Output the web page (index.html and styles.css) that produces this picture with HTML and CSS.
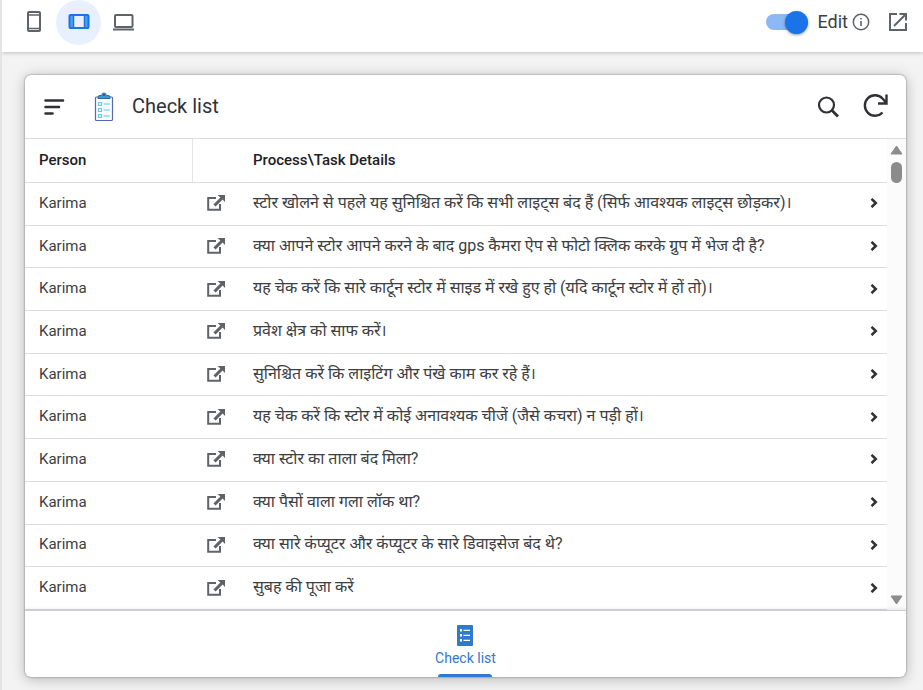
FILE: index.html
```html
<!DOCTYPE html>
<html lang="en">
<head>
<meta charset="utf-8">
<title>Check list</title>
<link rel="stylesheet" href="styles.css">
</head>
<body>
<svg class="sprite" aria-hidden="true">
  <symbol id="open" viewBox="0 0 18 16"><path d="M9 3H1.200v11.800H13V9" fill="none" stroke="currentColor" stroke-width="2"/><path d="M10.500 0H18v7l-2.400-2.400-7 7-2.200-2.200 7-7z" fill="currentColor"/></symbol>
  <symbol id="chevron" viewBox="0 0 8 10"><path d="M1.500 .8 5.800 5 1.500 9.200" fill="none" stroke="currentColor" stroke-width="2.500"/></symbol>
</svg>
<header class="preview-bar">
  <nav class="devices" aria-label="Device preview">
    <button class="device" aria-label="Phone"><svg width="24" height="24" viewBox="0 0 24 24" fill="none" stroke="currentColor"><rect x="6" y="2" width="12" height="19" rx="1" stroke-width="2"/><path d="M5 5h14M5 18.500h14" stroke-width="1.500"/></svg></button>
    <button class="device active" aria-label="Tablet" aria-pressed="true"><svg width="24" height="24" viewBox="0 0 24 24" fill="none" stroke="currentColor"><path d="M2.500 5h4v14h-4zM17.500 5h4v14h-4z" fill="#4aa3f0" stroke="none"/><rect x="2.500" y="5" width="19" height="13" rx="1" stroke-width="2"/><path d="M6.500 5v13M17.500 5v13" stroke-width="1.500"/></svg></button>
    <button class="device" aria-label="Laptop"><svg width="24" height="24" viewBox="0 0 24 24" fill="none" stroke="currentColor"><rect x="3" y="5" width="17.500" height="12" rx="1" stroke-width="2"/><path d="M1 19.500h21" stroke-width="2"/></svg></button>
  </nav>
  <div class="edit">
    <input class="switch" type="checkbox" role="switch" id="edit" checked>
    <label for="edit">Edit</label>
    <button class="info" aria-label="About editing"><svg width="18" height="18" viewBox="0 0 18 18"><circle cx="9" cy="9" r="7.700" fill="none" stroke="currentColor" stroke-width="1.500"/><path d="M8.200 8h1.600v5H8.200zM8.200 5h1.600v1.600H8.200z" fill="currentColor"/></svg></button>
    <button class="popout" aria-label="Open in new tab"><svg width="20" height="20" viewBox="0 0 20 20" fill="none" stroke="currentColor" stroke-width="2"><path d="M9 2H2v16h16v-7M11.500 2H18v6.500M18 2 6 14"/></svg></button>
  </div>
</header>
<main class="stage">
  <section class="app">
    <header class="app-bar">
      <button class="menu" aria-label="Menu"><svg width="22" height="18" viewBox="0 0 22 18" stroke="currentColor" stroke-width="2.600" stroke-linecap="round"><path d="M2.500 2.500H20M2.500 9H16M2.500 15.500h7"/></svg></button>
      <svg class="logo" width="20" height="30" viewBox="0 0 20 30" fill="none"><rect x="1.500" y="5" width="17" height="23.500" rx="1" fill="#f8fcff" stroke="#5967ad" stroke-width="1.200"/><path d="M4 6.500V5q0-1.500 2-1.500h1.500Q8 1 10 1t2.500 2.500H14q2 0 2 1.500v1.500z" fill="#3b9ad4" stroke="#3166a0"/><circle cx="10" cy="3" r="1" fill="#23517f"/><g stroke="#63c8ee" stroke-width="1.200"><path d="M4.500 10.500h3v3h-3zM4.500 16.500h3v3h-3zM4.500 22.500h3v3h-3zM9.500 12h6.500M9.500 18h6.500M9.500 24h6.500"/></g></svg>
      <h1>Check list</h1>
      <button aria-label="Search"><svg width="24" height="24" viewBox="0 0 24 24" fill="none" stroke="currentColor"><circle cx="10.500" cy="10" r="7.500" stroke-width="2.200"/><path d="m15.800 15.300 6.200 6.200" stroke-width="2.800"/></svg></button>
      <button aria-label="Refresh"><svg width="26" height="26" viewBox="0 0 26 26" fill="none" stroke="currentColor" stroke-width="2.400"><path d="M20.500 18.500A10.200 10.200 0 1 1 20.500 4.500L24 8.500M16 9.500H24.500V.5"/></svg></button>
    </header>
    <div class="viewport">
      <table>
        <colgroup><col class="c-person"><col class="c-open"><col><col class="c-go"></colgroup>
        <thead><tr><th class="divided">Person</th><th></th><th>Process\Task Details</th><th></th></tr></thead>
        <tbody>
          <tr><td>Karima</td><td class="open"><svg><use href="#open"/></svg></td><td class="task" lang="hi">स्टोर खोलने से पहले यह सुनिश्चित करें कि सभी लाइट्स बंद हैं (सिर्फ आवश्यक लाइट्स छोड़कर)।</td><td class="go"><svg><use href="#chevron"/></svg></td></tr>
          <tr><td>Karima</td><td class="open"><svg><use href="#open"/></svg></td><td class="task" lang="hi">क्या आपने स्टोर आपने करने के बाद gps कैमरा ऐप से फोटो क्लिक करके ग्रुप में भेज दी है?</td><td class="go"><svg><use href="#chevron"/></svg></td></tr>
          <tr><td>Karima</td><td class="open"><svg><use href="#open"/></svg></td><td class="task" lang="hi">यह चेक करें कि सारे कार्टून स्टोर में साइड में रखे हुए हो (यदि कार्टून स्टोर में हों तो)।</td><td class="go"><svg><use href="#chevron"/></svg></td></tr>
          <tr><td>Karima</td><td class="open"><svg><use href="#open"/></svg></td><td class="task" lang="hi">प्रवेश क्षेत्र को साफ करें।</td><td class="go"><svg><use href="#chevron"/></svg></td></tr>
          <tr><td>Karima</td><td class="open"><svg><use href="#open"/></svg></td><td class="task" lang="hi">सुनिश्चित करें कि लाइटिंग और पंखे काम कर रहे हैं।</td><td class="go"><svg><use href="#chevron"/></svg></td></tr>
          <tr><td>Karima</td><td class="open"><svg><use href="#open"/></svg></td><td class="task" lang="hi">यह चेक करें कि स्टोर में कोई अनावश्यक चीजें (जैसे कचरा) न पड़ी हों।</td><td class="go"><svg><use href="#chevron"/></svg></td></tr>
          <tr><td>Karima</td><td class="open"><svg><use href="#open"/></svg></td><td class="task" lang="hi">क्या स्टोर का ताला बंद मिला?</td><td class="go"><svg><use href="#chevron"/></svg></td></tr>
          <tr><td>Karima</td><td class="open"><svg><use href="#open"/></svg></td><td class="task" lang="hi">क्या पैसों वाला गला लॉक था?</td><td class="go"><svg><use href="#chevron"/></svg></td></tr>
          <tr><td>Karima</td><td class="open"><svg><use href="#open"/></svg></td><td class="task" lang="hi">क्या सारे कंप्यूटर और कंप्यूटर के सारे डिवाइसेज बंद थे?</td><td class="go"><svg><use href="#chevron"/></svg></td></tr>
          <tr><td>Karima</td><td class="open"><svg><use href="#open"/></svg></td><td class="task" lang="hi">सुबह की पूजा करें</td><td class="go"><svg><use href="#chevron"/></svg></td></tr>
        </tbody>
      </table>
      <div class="scrollbar" aria-hidden="true">
        <svg width="13" height="10" viewBox="0 0 13 10"><path d="M6.500 1 12 9H1z" fill="currentColor" stroke="currentColor" stroke-linejoin="round"/></svg>
        <span class="thumb"></span>
        <svg width="13" height="10" viewBox="0 0 13 10"><path d="M6.500 9 12 1H1z" fill="currentColor" stroke="currentColor" stroke-linejoin="round"/></svg>
      </div>
    </div>
    <nav class="tabs">
      <a class="tab" href="#" aria-current="page">
        <svg width="16" height="21" viewBox="0 0 16 21"><rect width="16" height="21" rx="1" fill="currentColor"/><path d="M3 4h2v2.500H3zM3 9h2v2.500H3zM3 14h2v2.500H3zM6.500 4.700H13V6H6.500zM6.500 9.700H13V11H6.500zM6.500 14.700H13V16H6.500z" fill="#fff"/></svg>
        <span>Check list</span>
      </a>
    </nav>
  </section>
</main>
</body>
</html>
```
FILE: styles.css
```css
* { box-sizing: border-box; }

body {
  display: flex;
  flex-direction: column;
  height: 100vh;
  margin: 0;
  border-left: 2px solid #e4e4e4;
  background: #f3f3f3;
  color: #3c4043;
  font-family: Roboto, "Noto Sans Devanagari", "Noto Sans", sans-serif;
  font-size: 15px;
}

.sprite { position: absolute; width: 0; height: 0; }
svg { display: block; }

button {
  display: grid;
  place-items: center;
  padding: 0;
  border: 0;
  background: none;
  color: inherit;
}

.preview-bar {
  position: relative;
  display: flex;
  justify-content: space-between;
  align-items: center;
  height: 52px;
  padding: 0 15px 8px 9px;
  background: #fff;
  box-shadow: 0 1px 4px rgba(0, 0, 0, .22);
  color: #5f6368;
}

.devices { display: flex; }
.device { width: 45px; height: 45px; border-radius: 50%; }
.device.active { background: #e8f0fe; color: #1a73e8; }

.edit { display: flex; align-items: center; }
.edit label { margin: 0 4px 0 10px; color: #3c4043; font-size: 18px; line-height: 22px; }
.popout { margin-left: 18px; }

.switch {
  appearance: none;
  display: flex;
  align-items: center;
  justify-content: flex-end;
  width: 42px;
  height: 16px;
  margin: 0;
  border-radius: 8px;
  background: #8cb8f4;
}
.switch::before {
  content: "";
  width: 23px;
  height: 23px;
  border-radius: 50%;
  background: #1a73e8;
  box-shadow: 0 1px 3px rgba(0, 0, 0, .4);
}
.switch:not(:checked) { justify-content: flex-start; }

.stage {
  display: flex;
  flex: 1;
  min-height: 0;
  padding: 23px 17px 13px 23px;
}

.app {
  display: flex;
  flex: 1;
  flex-direction: column;
  overflow: hidden;
  border-radius: 6px;
  background: #fff;
  box-shadow: 0 0 2px rgba(0, 0, 0, .5), 0 2px 14px rgba(0, 0, 0, .26);
}

.app-bar {
  display: flex;
  align-items: center;
  height: 64px;
  padding: 0 18px;
  border-bottom: 1px solid #dadce0;
  color: #303134;
}
.logo { margin: 0 18px 0 29px; }
h1 { flex: 1; margin: 0; padding-bottom: 2px; font-size: 20px; font-weight: 400; line-height: 26px; }
.app-bar h1 ~ button { margin-left: 22px; }

.viewport { display: flex; flex: 1; min-height: 0; }

table {
  flex: 1;
  height: 100%;
  border-collapse: separate;
  border-spacing: 0;
  table-layout: fixed;
}
.c-person { width: 168px; }
.c-open { width: 46px; }
.c-go { width: 32px; }

th, td {
  padding: 0 14px 2px;
  border-bottom: 1px solid #dadce0;
  text-align: left;
  line-height: 20px;
  white-space: nowrap;
}
th { height: 44px; color: #202124; font-weight: 500; }
.divided { border-right: 1px solid #e4e5e8; }
.task { font-size: 16px; }

.open, .go { padding: 0 0 1px; color: #5f6368; }
.open svg { width: 18px; height: 16px; margin: 0 auto; }
.go { color: #303134; }
.go svg { width: 8px; height: 10px; margin-left: 15px; }

.scrollbar {
  display: flex;
  flex-direction: column;
  align-items: center;
  width: 19px;
  padding: 6px 0 5px;
  background: #fbfbfb;
  color: #8b8b8b;
}
.thumb { width: 11px; height: 21px; margin: 7px 0 auto; border-radius: 6px; background: currentColor; }

.tabs {
  display: flex;
  justify-content: center;
  height: 67px;
  border-top: 1px solid #ccced4;
  box-shadow: 0 0 4px rgba(0, 0, 0, .16);
}
.tab {
  display: flex;
  flex-direction: column;
  align-items: center;
  padding-top: 14px;
  color: #3079cb;
  font-size: 14px;
  line-height: 18px;
  text-decoration: none;
}
.tab span { margin-top: 3px; }
.tab::after {
  content: "";
  width: 54px;
  height: 3px;
  margin-top: auto;
  border-radius: 3px 3px 0 0;
  background: currentColor;
}
```
